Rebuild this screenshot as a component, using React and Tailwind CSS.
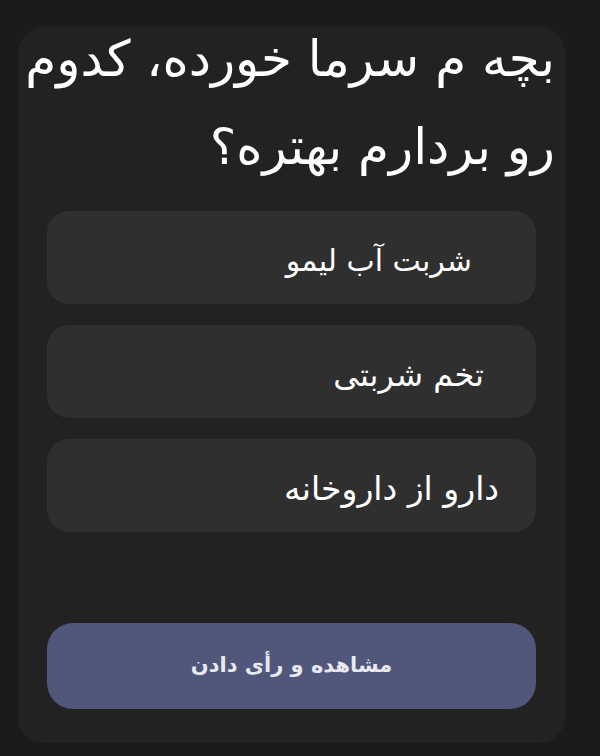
export default function App() {
  const options = [
    { label: "شربت آب لیمو", pr: "pr-[64px]", size: "text-[30px]" },
    { label: "تخم شربتی", pr: "pr-[52px]", size: "text-[32px]" },
    { label: "دارو از داروخانه", pr: "pr-[37px]", size: "text-[33px]" },
  ];
  return (
    <div
      dir="rtl"
      className="w-[600px] h-[756px] bg-[#1b1b1b] pt-[27px] pl-[18px] pr-[35px]"
      style={{ fontFamily: '"DejaVu Sans", "Noto Sans", sans-serif' }}
    >
      <div className="h-[716px] rounded-[26px] bg-[#222222] flex flex-col pt-[2px] pb-[34px] px-[29px]">
        <h1 className="text-white text-[50px] leading-[88px] font-normal text-right whitespace-nowrap mr-[-19px] mt-[-14px]">
          بچه م سرما خورده، کدوم
          <br />
          رو بردارم بهتره؟
        </h1>
        <div className="flex flex-col gap-[21px] mt-[20px]">
          {options.map((o) => (
            <div
              key={o.label}
              className={`h-[93px] rounded-[22px] bg-[#2f2f2f] flex items-center ${o.pr}`}
            >
              <span className={`text-white ${o.size} leading-none pt-[6px]`}>{o.label}</span>
            </div>
          ))}
        </div>
        <div className="flex-1" />
        <button className="h-[86px] rounded-[26px] bg-[#50577a] flex items-center justify-center text-[#e8e8f0] text-[21px] font-bold">
          مشاهده و رأی دادن
        </button>
      </div>
    </div>
  );
}
